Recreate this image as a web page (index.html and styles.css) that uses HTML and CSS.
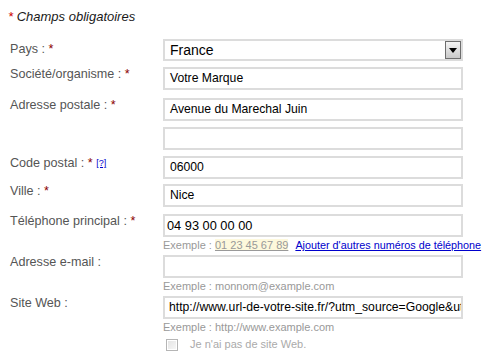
FILE: index.html
```html
<!DOCTYPE html>
<html lang="fr">
<head>
<meta charset="utf-8">
<link rel="stylesheet" href="styles.css">
</head>
<body>
<div class="form">
  <p class="title"><span class="req">*</span> Champs obligatoires</p>

  <div class="row row-select">
    <label class="lbl lbl-select">Pays : <span class="star">*</span></label>
    <div class="field">
      <div class="select"><span class="select-text">France</span><span class="select-btn"><svg width="8" height="5" viewBox="0 0 8 5"><path d="M0 0H8L4 5Z" fill="#000"/></svg></span></div>
    </div>
  </div>

  <div class="row gap8">
    <label class="lbl">Société/organisme : <span class="star">*</span></label>
    <div class="field"><div class="input">Votre Marque</div></div>
  </div>

  <div class="row">
    <label class="lbl">Adresse postale : <span class="star">*</span></label>
    <div class="field"><div class="input">Avenue du Marechal Juin</div></div>
  </div>

  <div class="row">
    <span class="lbl"></span>
    <div class="field"><div class="input"></div></div>
  </div>

  <div class="row gap5">
    <label class="lbl">Code postal : <span class="star">*</span> <a class="help" href="#">[?]</a></label>
    <div class="field"><div class="input">06000</div></div>
  </div>

  <div class="row gap7">
    <label class="lbl">Ville : <span class="star">*</span></label>
    <div class="field"><div class="input">Nice</div></div>
  </div>

  <div class="row gap1">
    <label class="lbl">Téléphone principal : <span class="star">*</span></label>
    <div class="field">
      <div class="input input-tel">04 93 00 00 00</div>
      <div class="hint">Exemple : <span class="sample">01 23 45 67 89</span><a class="more" href="#">Ajouter d'autres numéros de téléphone</a></div>
    </div>
  </div>

  <div class="row gap1">
    <label class="lbl">Adresse e-mail :</label>
    <div class="field">
      <div class="input"></div>
      <div class="hint">Exemple : monnom@example.com</div>
    </div>
  </div>

  <div class="row gap1">
    <label class="lbl">Site Web :</label>
    <div class="field">
      <div class="input input-url">http://www.url-de-votre-site.fr/?utm_source=Google&amp;utm_medium=cpc</div>
      <div class="hint">Exemple : http://www.example.com</div>
      <div class="check"><span class="box"></span><span class="check-text">Je n'ai pas de site Web.</span></div>
    </div>
  </div>
</div>
</body>
</html>
```

FILE: styles.css
```css
* { box-sizing: border-box; }
html, body { margin: 0; padding: 0; background: #fff; }
body { font-family: Arial, "Liberation Sans", sans-serif; }

.form { padding: 9px 0 0 10px; }

.title {
  margin: 0 0 15px -2px;
  font-size: 13px;
  line-height: 15px;
  font-style: italic;
  color: #1a1a1a;
}
.req { color: #cc0000; }

.row {
  display: grid;
  grid-template-columns: 153px 300px;
  margin-bottom: 6px;
}
.row.gap8 { margin-bottom: 8px; }
.row.gap5 { margin-bottom: 5px; }
.row.gap7 { margin-bottom: 7px; }
.row.gap1 { margin-bottom: 1px; }

.lbl {
  font-size: 12.6px;
  line-height: 15px;
  color: #555;
}
.lbl-select { padding-top: 3px; }
.star { color: #8b0000; }
.help {
  font-size: 9px;
  color: #0000cc;
  text-decoration: underline;
  vertical-align: 1px;
}

.select {
  height: 22px;
  border: 2px solid #dcdcdc;
  display: flex;
  align-items: center;
  justify-content: space-between;
  font-size: 14px;
  color: #000;
  padding-left: 5px;
}
.select-btn {
  width: 16px;
  height: 18px;
  border: 1px solid #6e6e6e;
  background: linear-gradient(#f4f4f4, #c9c9c9);
  display: flex;
  align-items: center;
  justify-content: center;
}

.input {
  height: 23px;
  border: 2px solid #dcdcdc;
  font-size: 12.2px;
  line-height: 19px;
  color: #000;
  padding-left: 5px;
  white-space: nowrap;
  overflow: hidden;
}
.input-tel { padding-left: 2px; font-size: 12.8px; }
.input-url { padding-left: 4px; }

.hint {
  font-size: 11px;
  line-height: 15px;
  color: #999;
  white-space: nowrap;
  margin-top: 1px;
  margin-bottom: 1px;
}
.sample {
  color: #999;
  background: #fdf8dc;
  text-decoration: underline;
}
.more {
  margin-left: 7px;
  font-size: 10.8px;
  color: #0000cc;
  text-decoration: underline;
}

.check {
  display: flex;
  align-items: center;
  margin-top: 2px;
  padding-left: 3px;
}
.box {
  width: 12px;
  height: 12px;
  border: 1px solid #b5b5b5;
  background: linear-gradient(135deg, #e2e2e2, #f8f8f8);
  box-shadow: inset 0 0 0 1px #fff;
}
.check-text {
  margin-left: 12px;
  font-size: 11px;
  line-height: 15px;
  color: #aaa;
}
```
